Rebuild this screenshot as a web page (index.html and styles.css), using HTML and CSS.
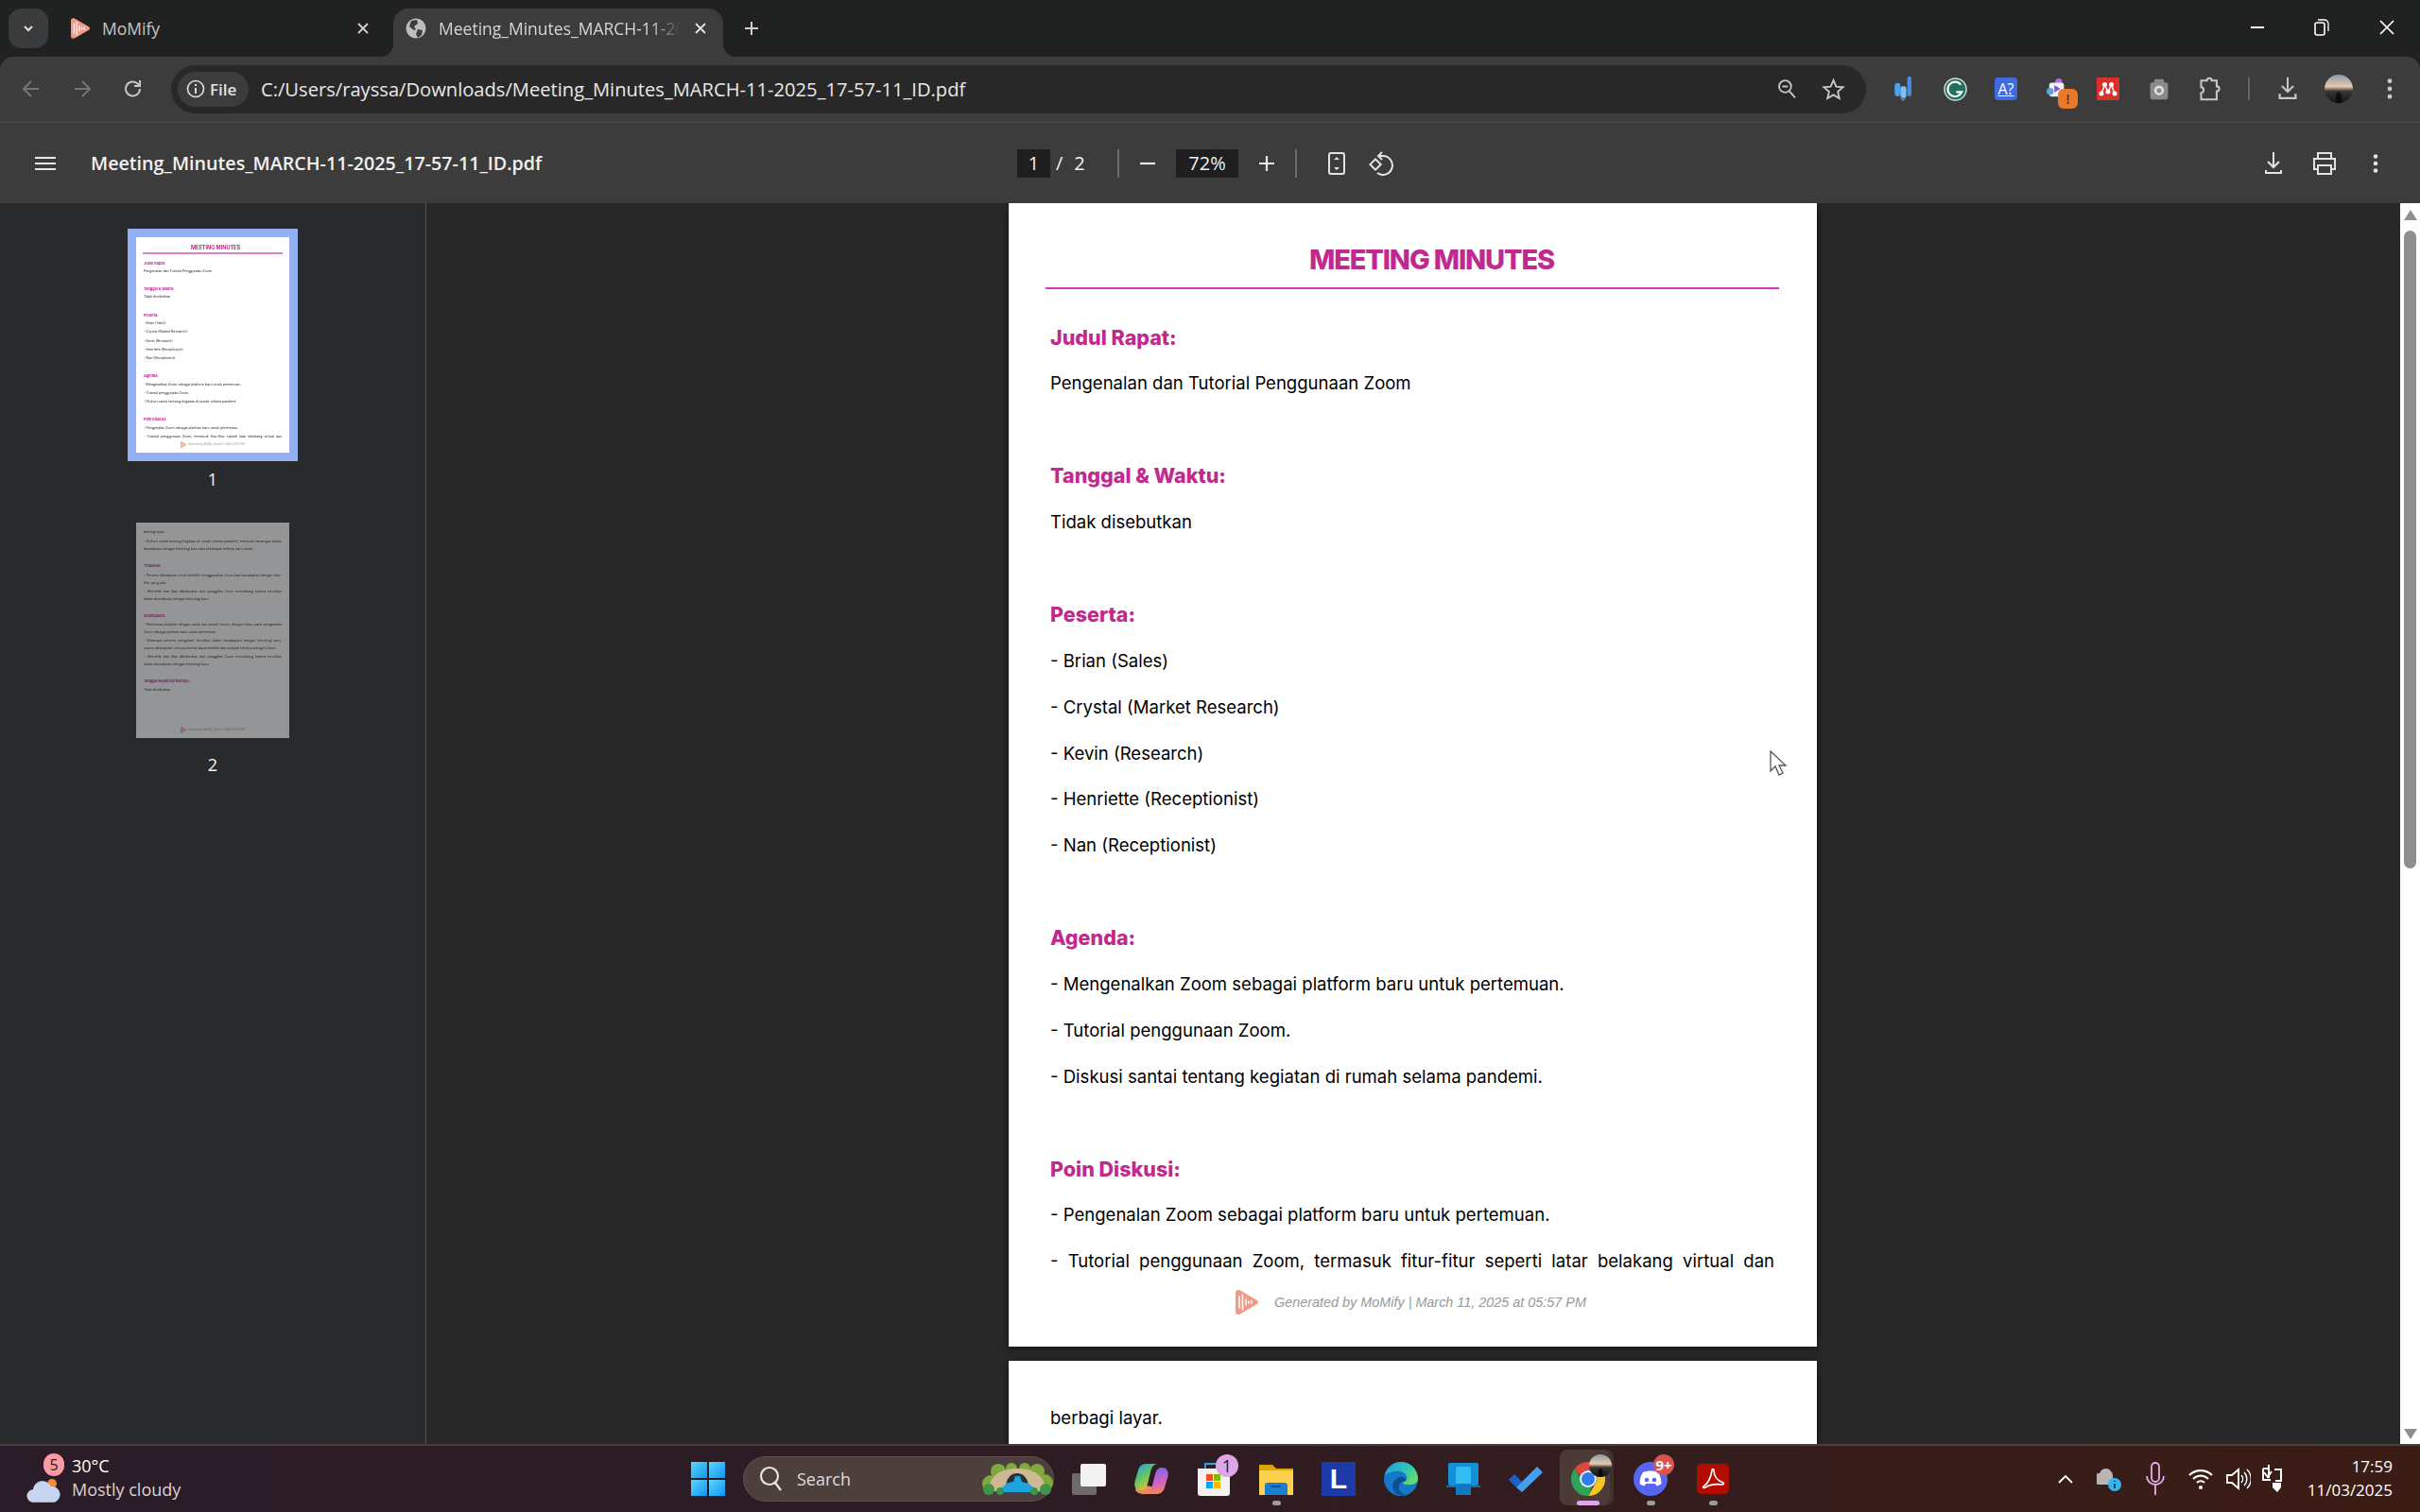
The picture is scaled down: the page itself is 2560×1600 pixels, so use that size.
FILE: index.html
```html
<!DOCTYPE html>
<html lang="en">
<head>
  <meta charset="UTF-8">
  <title>Meeting_Minutes_MARCH-11-2025_17-57-11_ID.pdf</title>
  <link rel="stylesheet" href="styles.css">
</head>
<body>
  <svg class="defs" width="0" height="0">
    <defs>
      <symbol id="momify" viewBox="0 0 24 26">
        <path fill="#ef9b86" d="M3 0C1 0 0 1 0 3v20c0 2 1 3 3 3 1.200 0 2.200-.6 3.200-1.300L22.800 15c1.600-1 1.600-3 0-4L6.200 1.300C5.200.6 4.200 0 3 0z"/>
        <path stroke="#fff" stroke-width="1.500" stroke-linecap="round" d="M4 7v12M7.500 5v16M11 10v6M14 12v2M17 11.500v3"/>
      </symbol>
      <linearGradient id="win" x1="0" y1="0" x2="1" y2="1"><stop offset="0" stop-color="#5fd4fc"/><stop offset="1" stop-color="#0f96f3"/></linearGradient>
      <linearGradient id="edge" x1="0" y1="0" x2="1" y2=".6"><stop offset="0" stop-color="#1b9ed8"/><stop offset=".55" stop-color="#2bc0c0"/><stop offset="1" stop-color="#62dc6a"/></linearGradient>
      <linearGradient id="sunset" x1="0" y1="0" x2="0" y2="1"><stop offset="0" stop-color="#8a9aa8"/><stop offset=".42" stop-color="#e8c8ae"/><stop offset=".58" stop-color="#3a3634"/><stop offset="1" stop-color="#141414"/></linearGradient>
      <linearGradient id="copilot-a" x1="0" y1="0" x2=".6" y2="1"><stop offset="0" stop-color="#1f9cf0"/><stop offset=".5" stop-color="#5ec46a"/><stop offset="1" stop-color="#f5c330"/></linearGradient>
      <linearGradient id="copilot-b" x1=".4" y1="0" x2=".6" y2="1"><stop offset="0" stop-color="#7a6ae8"/><stop offset=".55" stop-color="#d060c8"/><stop offset="1" stop-color="#f08a5a"/></linearGradient>
      <symbol id="avatar" viewBox="0 0 30 30"><circle cx="15" cy="15" r="15" fill="url(#sunset)"/><path fill="#0c0c0c" d="M12 30v-9l3-3 3 3v9z"/></symbol>
    </defs>
  </svg>

  <header class="tabstrip">
    <button class="tab-search"><svg width="14" height="14" viewBox="0 0 14 14"><path d="M3 5l4 4 4-4" fill="none" stroke="#e3e3e3" stroke-width="2"/></svg></button>
    <div class="tab">
      <svg class="tab-icon" width="20" height="22"><use href="#momify"/></svg>
      <span class="tab-title">MoMify</span>
      <svg class="tab-close" width="14" height="14" viewBox="0 0 14 14"><path d="M2 2l10 10M12 2L2 12" stroke="#cfcfcf" stroke-width="1.800"/></svg>
    </div>
    <div class="tab tab-active">
      <svg class="tab-icon" width="22" height="22" viewBox="0 0 22 22"><circle cx="11" cy="11" r="10.500" fill="#bdbdbd"/><path fill="#3c3c3c" d="M6 3l6-1 1 4-4 3 2 3-2 1-5-4zM13 12l5 1-1 5-4 3-2-4z"/></svg>
      <span class="tab-title tab-title-cut">Meeting_Minutes_MARCH-11-2025_17-57-11_ID.pdf</span>
      <svg class="tab-close" width="14" height="14" viewBox="0 0 14 14"><path d="M2 2l10 10M12 2L2 12" stroke="#e3e3e3" stroke-width="1.800"/></svg>
    </div>
    <button class="tab-new"><svg width="18" height="18" viewBox="0 0 18 18"><path d="M9 2v14M2 9h14" stroke="#cfcfcf" stroke-width="2"/></svg></button>
    <div class="window-controls">
      <span class="window-btn"><svg width="16" height="16" viewBox="0 0 16 16"><path d="M1 8h14" stroke="#fff" stroke-width="2"/></svg></span>
      <span class="window-btn"><svg width="16" height="20" viewBox="0 0 16 20"><rect x="1" y="5" width="10" height="13" rx="2" fill="none" stroke="#fff" stroke-width="1.600"/><path d="M4 2h7c2 0 4 2 4 4v8" fill="none" stroke="#fff" stroke-width="1.300"/></svg></span>
      <span class="window-btn window-close"><svg width="16" height="16" viewBox="0 0 16 16"><path d="M1 1l14 14M15 1L1 15" stroke="#fff" stroke-width="1.700"/></svg></span>
    </div>
  </header>

  <nav class="toolbar">
    <span class="slot"><svg width="22" height="22" viewBox="0 0 22 22"><path d="M19 11H4M11 3l-8 8 8 8" fill="none" stroke="#757575" stroke-width="2"/></svg></span>
    <span class="slot"><svg width="22" height="22" viewBox="0 0 22 22"><path d="M3 11h15M11 3l8 8-8 8" fill="none" stroke="#757575" stroke-width="2"/></svg></span>
    <span class="slot"><svg width="22" height="22" viewBox="0 0 22 22"><path d="M18 11a7.500 7.500 0 1 1-2.200-5.300L18 8M18 2v6h-6" fill="none" stroke="#c7c7c7" stroke-width="2"/></svg></span>
    <div class="omnibox">
      <span class="chip">
        <svg width="20" height="20" viewBox="0 0 20 20"><circle cx="10" cy="10" r="8.500" fill="none" stroke="#dedede" stroke-width="1.600"/><path d="M10 9v6M10 5v2" stroke="#dedede" stroke-width="2"/></svg>
        File
      </span>
      <span class="url">C:/Users/rayssa/Downloads/Meeting_Minutes_MARCH-11-2025_17-57-11_ID.pdf</span>
      <span class="omni-icon"><svg width="21" height="22" viewBox="0 0 24 26"><circle cx="9.500" cy="10" r="7.500" fill="none" stroke="#c7c7c7" stroke-width="2.200"/><path d="M6 10h7M15 16l7 8" stroke="#c7c7c7" stroke-width="2.200"/></svg></span>
      <span class="omni-icon"><svg width="25" height="25" viewBox="0 0 26 26"><path d="M13 3l3 7 7.500.7-5.700 5 1.700 7.300L13 19.200 6.500 23l1.700-7.300-5.700-5L10 10z" fill="none" stroke="#c7c7c7" stroke-width="2"/></svg></span>
    </div>
    <span class="slot slot-first">
      <svg width="20" height="30" viewBox="0 0 22 34"><rect x="0" y="10" width="7" height="16" rx="3.500" fill="#4aa3f0"/><rect x="7" y="14" width="7" height="14" rx="3" fill="#7cc0f5"/><rect x="15" y="2" width="5" height="24" rx="2.500" fill="#3f8fe8"/><path d="M6 28h8l-4 4z" fill="#6e7a88"/></svg>
    </span>
    <span class="slot">
      <svg width="25" height="25" viewBox="0 0 26 26"><circle cx="13" cy="13" r="12" fill="#23705f" stroke="#cfe0da" stroke-width="1.500"/><path d="M19 8a8 8 0 1 0 1 8h-6" fill="none" stroke="#fff" stroke-width="2.200"/></svg>
    </span>
    <span class="slot"><span class="ext-tile ext-a">A?</span></span>
    <span class="slot slot-badged">
      <svg width="22" height="24" viewBox="0 0 24 26"><circle cx="14" cy="5" r="4" fill="#b06ae8"/><rect x="3" y="6" width="17" height="16" rx="3" fill="#eef1f6"/><circle cx="4" cy="16" r="4" fill="#5aa6e8"/><path d="M9 9l7 4-7 4z" fill="#8a4ae0"/></svg>
      <span class="ext-alert">!</span>
    </span>
    <span class="slot"><span class="ext-tile ext-m"><svg width="20" height="16" viewBox="0 0 20 16"><g fill="#fff"><circle cx="6.500" cy="3.500" r="2.500"/><circle cx="13.500" cy="3.500" r="2.500"/><circle cx="3" cy="13" r="2.500"/><circle cx="10" cy="11" r="2.500"/><circle cx="17" cy="13" r="2.500"/></g><path d="M6.500 4L3 13M6.500 4L10 11M13.500 4L10 11M13.500 4L17 13" stroke="#fff" stroke-width="1.500"/></svg></span></span>
    <span class="slot"><svg width="22" height="24" viewBox="0 0 24 28"><rect x="1" y="6" width="22" height="21" rx="3" fill="#8a8a8a"/><rect x="6" y="2" width="12" height="6" rx="2" fill="#8a8a8a"/><circle cx="12" cy="16" r="6" fill="#e0e0e0"/><circle cx="12" cy="16" r="3" fill="#8a8a8a"/></svg></span>
    <span class="slot"><svg width="24" height="26" viewBox="0 0 26 30"><path d="M2 5h7c0-4 6-4 6 0h6v7c4 0 4 6 0 6v10H2v-8c4 0 4-7 0-7z" fill="none" stroke="#c7c7c7" stroke-width="2.400"/></svg></span>
    <span class="tool-sep"></span>
    <span class="slot"><svg width="24" height="26" viewBox="0 0 26 34"><path d="M13 1v20M5 13l8 8 8-8" fill="none" stroke="#c7c7c7" stroke-width="2.600"/><path d="M2 24v6h22v-6" fill="none" stroke="#c7c7c7" stroke-width="3"/></svg></span>
    <span class="slot"><svg width="30" height="30"><use href="#avatar"/></svg></span>
    <span class="slot"><svg width="6" height="22" viewBox="0 0 6 24"><g fill="#c7c7c7"><circle cx="3" cy="3" r="2.600"/><circle cx="3" cy="12" r="2.600"/><circle cx="3" cy="21" r="2.600"/></g></svg></span>
  </nav>

  <div class="pdf-bar">
    <div class="pdf-left">
      <span class="pdf-menu"><svg width="22" height="16" viewBox="0 0 22 16"><path d="M0 2h22M0 8h22M0 14h22" stroke="#e8e8e8" stroke-width="2.200"/></svg></span>
      <span class="pdf-name">Meeting_Minutes_MARCH-11-2025_17-57-11_ID.pdf</span>
    </div>
    <span class="pdf-field pdf-page">1</span>
    <span class="pdf-count"><span>/</span><span>2</span></span>
    <span class="pdf-sep"></span>
    <span class="pdf-btn"><svg width="18" height="18" viewBox="0 0 18 18"><path d="M1 9h16" stroke="#e8e8e8" stroke-width="2.200"/></svg></span>
    <span class="pdf-field pdf-zoom">72%</span>
    <span class="pdf-btn"><svg width="18" height="18" viewBox="0 0 18 18"><path d="M9 1v16M1 9h16" stroke="#e8e8e8" stroke-width="2.200"/></svg></span>
    <span class="pdf-sep"></span>
    <span class="pdf-tool pdf-fit"><svg width="18" height="24" viewBox="0 0 18 24"><rect x="1" y="1" width="16" height="22" rx="2" fill="none" stroke="#e3e3e3" stroke-width="2"/><path d="M9 5l3 3H6zM9 19l3-3H6z" fill="#e3e3e3"/></svg></span>
    <span class="pdf-tool pdf-rotate"><svg width="26" height="26" viewBox="0 0 26 26"><rect x="-4" y="-4" width="8" height="8" transform="translate(7 14) rotate(45)" fill="none" stroke="#e3e3e3" stroke-width="2"/><path d="M11 5h3a10 10 0 1 1-5 18M14 1l-4 4 4 4" fill="none" stroke="#e3e3e3" stroke-width="2"/></svg></span>
    <div class="pdf-right">
      <span class="slot"><svg width="20" height="26" viewBox="0 0 20 26"><path d="M10 1v16M4 11l6 6 6-6" fill="none" stroke="#e3e3e3" stroke-width="2"/><path d="M2 20v3h16v-3" fill="none" stroke="#e3e3e3" stroke-width="2"/></svg></span>
      <span class="slot"><svg width="24" height="26" viewBox="0 0 24 26"><path d="M5 8V2h14v6M5 19H1V8h22v11h-4" fill="none" stroke="#e3e3e3" stroke-width="2"/><rect x="5" y="15" width="14" height="9" fill="none" stroke="#e3e3e3" stroke-width="2"/></svg></span>
      <span class="slot"><svg width="6" height="20" viewBox="0 0 6 20"><g fill="#e3e3e3"><circle cx="3" cy="2.500" r="2.300"/><circle cx="3" cy="10" r="2.300"/><circle cx="3" cy="17.500" r="2.300"/></g></svg></span>
    </div>
  </div>

  <main class="workspace">
    <aside class="sidebar">
      <div class="thumb thumb-current">
        <div class="mini">
          <div class="mini-title">MEETING MINUTES</div>
          <div class="mini-rule"></div>
          <div class="mini-head">Judul Rapat:</div>
          <div class="mini-line">Pengenalan dan Tutorial Penggunaan Zoom</div>
          <div class="mini-head mini-gap">Tanggal &amp; Waktu:</div>
          <div class="mini-line">Tidak disebutkan</div>
          <div class="mini-head mini-gap">Peserta:</div>
          <div class="mini-line">- Brian (Sales)</div>
          <div class="mini-line">- Crystal (Market Research)</div>
          <div class="mini-line">- Kevin (Research)</div>
          <div class="mini-line">- Henriette (Receptionist)</div>
          <div class="mini-line">- Nan (Receptionist)</div>
          <div class="mini-head mini-gap">Agenda:</div>
          <div class="mini-line">- Mengenalkan Zoom sebagai platform baru untuk pertemuan.</div>
          <div class="mini-line">- Tutorial penggunaan Zoom.</div>
          <div class="mini-line">- Diskusi santai tentang kegiatan di rumah selama pandemi.</div>
          <div class="mini-head mini-gap">Poin Diskusi:</div>
          <div class="mini-line">- Pengenalan Zoom sebagai platform baru untuk pertemuan.</div>
          <div class="mini-line mini-full">- Tutorial penggunaan Zoom, termasuk fitur-fitur seperti latar belakang virtual dan</div>
          <div class="mini-foot"><svg width="6" height="7"><use href="#momify"/></svg>Generated by MoMify | March 11, 2025 at 05:57 PM</div>
        </div>
      </div>
      <div class="thumb-label">1</div>
      <div class="thumb">
        <div class="mini mini-dim">
          <div class="mini-line">berbagi layar.</div>
          <p class="mini-para">- Diskusi santai tentang kegiatan di rumah selama pandemi, termasuk tantangan dalam beradaptasi dengan teknologi baru dan kehidupan bekerja dari rumah.</p>
          <div class="mini-head mini-gap">Tindakan:</div>
          <p class="mini-para">- Peserta diharapkan untuk berlatih menggunakan Zoom dan beradaptasi dengan fitur-fitur yang ada.</p>
          <p class="mini-para">- Henriette dan Nan dibebaskan dari panggilan Zoom mendatang karena kesulitan dalam beradaptasi dengan teknologi baru.</p>
          <div class="mini-head mini-gap">Kesimpulan:</div>
          <p class="mini-para">- Pertemuan berjalan dengan santai dan penuh humor, dengan fokus pada pengenalan Zoom sebagai platform baru untuk pertemuan.</p>
          <p class="mini-para">- Beberapa peserta mengalami kesulitan dalam beradaptasi dengan teknologi baru, namun diharapkan semua peserta dapat berlatih dan menjadi terbiasa dengan Zoom.</p>
          <p class="mini-para">- Henriette dan Nan dibebaskan dari panggilan Zoom mendatang karena kesulitan dalam beradaptasi dengan teknologi baru.</p>
          <div class="mini-head mini-gap">Tanggal Rapat Berikutnya:</div>
          <div class="mini-line">Tidak disebutkan</div>
          <div class="mini-foot"><svg width="6" height="7"><use href="#momify"/></svg>Generated by MoMify | March 11, 2025 at 05:57 PM</div>
        </div>
      </div>
      <div class="thumb-label">2</div>
    </aside>

    <section class="viewer">
      <article class="sheet">
        <h1 class="sheet-title">MEETING MINUTES</h1>
        <div class="sheet-rule"></div>
        <div class="sheet-section sheet-first">
          <h2>Judul Rapat:</h2>
          <p>Pengenalan dan Tutorial Penggunaan Zoom</p>
        </div>
        <div class="sheet-section">
          <h2>Tanggal &amp; Waktu:</h2>
          <p>Tidak disebutkan</p>
        </div>
        <div class="sheet-section">
          <h2>Peserta:</h2>
          <p>- Brian (Sales)</p>
          <p>- Crystal (Market Research)</p>
          <p>- Kevin (Research)</p>
          <p>- Henriette (Receptionist)</p>
          <p>- Nan (Receptionist)</p>
        </div>
        <div class="sheet-section">
          <h2>Agenda:</h2>
          <p>- Mengenalkan Zoom sebagai platform baru untuk pertemuan.</p>
          <p>- Tutorial penggunaan Zoom.</p>
          <p>- Diskusi santai tentang kegiatan di rumah selama pandemi.</p>
        </div>
        <div class="sheet-section">
          <h2>Poin Diskusi:</h2>
          <p>- Pengenalan Zoom sebagai platform baru untuk pertemuan.</p>
          <p class="full-line">- Tutorial penggunaan Zoom, termasuk fitur-fitur seperti latar belakang virtual dan</p>
        </div>
        <footer class="sheet-foot">
          <svg width="24" height="26"><use href="#momify"/></svg>
          <span>Generated by MoMify | March 11, 2025 at 05:57 PM</span>
        </footer>
      </article>
      <article class="sheet sheet-next">
        <div class="sheet-section sheet-first">
          <p>berbagi layar.</p>
        </div>
      </article>
    </section>

    <div class="scrollbar">
      <svg width="14" height="11" viewBox="0 0 14 11"><path d="M7 0l7 11H0z" fill="#8f8f8f"/></svg>
      <span class="scroll-thumb"></span>
      <svg class="scroll-down" width="14" height="11" viewBox="0 0 14 11"><path d="M7 11l7-11H0z" fill="#8f8f8f"/></svg>
    </div>

    <svg class="cursor" width="20" height="28" viewBox="0 0 20 28"><path d="M2 1v21l5-5 4 9 4-2-4-8h7z" fill="#fff" stroke="#555" stroke-width="1.300"/></svg>
  </main>

  <footer class="taskbar">
    <div class="weather">
      <span class="weather-icon">
        <svg width="36" height="32" viewBox="0 0 36 30"><circle cx="27" cy="9" r="5" fill="#f08a3c"/><path d="M8 29a7 7 0 0 1-1-14 10 10 0 0 1 19-3 8.500 8.500 0 0 1 2 17z" fill="#c6d6f2"/><path d="M8 29a7 7 0 0 1-3-1h26a8 8 0 0 1-3 1z" fill="#8fb0e6"/></svg>
        <span class="weather-badge">5</span>
      </span>
      <div class="weather-text">
        <div>30°C</div>
        <div class="weather-desc">Mostly cloudy</div>
      </div>
    </div>
    <span class="task">
      <svg width="36" height="36" viewBox="0 0 36 36"><rect width="17" height="17" x="0" y="0" fill="url(#win)"/><rect width="17" height="17" x="19" y="0" fill="url(#win)"/><rect width="17" height="17" x="0" y="19" fill="url(#win)"/><rect width="17" height="17" x="19" y="19" fill="url(#win)"/></svg>
    </span>
    <div class="search">
      <svg width="26" height="28" viewBox="0 0 26 28"><circle cx="11" cy="11" r="9" fill="none" stroke="#e8e4e0" stroke-width="2.200"/><path d="M17 18l6 8" stroke="#e8e4e0" stroke-width="2.400"/></svg>
      <span class="search-label">Search</span>
      <svg class="search-art" width="76" height="34" viewBox="0 0 76 34">
        <g fill="#7fa83f">
          <circle cx="10" cy="22" r="9"/><circle cx="18" cy="9" r="8"/><circle cx="32" cy="6" r="6"/><circle cx="46" cy="6" r="6"/><circle cx="59" cy="9" r="8"/><circle cx="67" cy="21" r="9"/>
        </g>
        <path d="M8 30C8 14 20 6 38 6s30 8 30 24z" fill="#cfb994"/>
        <path d="M26 26c0-9 5-15 12-15s12 6 12 15z" fill="#2a3238"/>
        <path d="M16 31l12-10 6-1 2-6h5l2 6 7 2 12 9z" fill="#1fa3dc"/>
        <g fill="#3f9448">
          <circle cx="8" cy="28" r="6"/><circle cx="20" cy="30" r="4"/><circle cx="56" cy="30" r="4"/><circle cx="68" cy="28" r="6"/>
        </g>
      </svg>
    </div>
    <span class="task">
      <svg width="36" height="33" viewBox="0 0 36 33"><rect x="0" y="10" width="26" height="23" rx="2" fill="#6e6a6a"/><rect x="9" y="0" width="27" height="24" rx="2" fill="#f2f2f2"/></svg>
    </span>
    <span class="task">
      <svg width="36" height="34" viewBox="0 0 36 34"><path d="M24 26c-1 4-4 7-8 7h-3c-8 1-12-3-12-5 0-3 9-1 11-4z" fill="#f08a5a"/><path d="M12 1h12c-4 1-6 4-7 9l-3 12c-1 4-3 7-7 7C1 29-1 24 1 18L4 8c1-4 4-7 8-7z" fill="url(#copilot-a)"/><path d="M24 33H12c4-1 6-4 7-9l3-12c1-4 3-7 7-7 6 0 8 5 6 11l-3 10c-1 4-4 7-8 7z" fill="url(#copilot-b)"/></svg>
    </span>
    <span class="task">
      <svg width="36" height="36" viewBox="0 0 36 36"><path d="M9 7V2h12v5" fill="none" stroke="#2aa0e8" stroke-width="2"/><path d="M1 7h34v26a3 3 0 0 1-3 3H4a3 3 0 0 1-3-3z" fill="#f4f2f0"/><rect x="10" y="13" width="7" height="7" fill="#f25022"/><rect x="18" y="13" width="7" height="7" fill="#7fba00"/><rect x="10" y="21" width="7" height="7" fill="#00a4ef"/><rect x="18" y="21" width="7" height="7" fill="#ffb900"/></svg>
      <span class="task-badge badge-lilac">1</span>
    </span>
    <span class="task task-open">
      <svg width="36" height="34" viewBox="0 0 36 34"><path d="M0 2h14l4 4h18v28H0z" fill="#e0a400"/><path d="M0 8h36v26H0z" fill="#fdd04f"/><path d="M6 32V24a3 3 0 0 1 3-3h18a3 3 0 0 1 3 3v10H6z" fill="#1a7fd0"/><path d="M13 25h10" stroke="#0b4f8a" stroke-width="2"/></svg>
    </span>
    <span class="task"><span class="letter-tile">L</span></span>
    <span class="task">
      <svg width="36" height="36" viewBox="0 0 36 36"><circle cx="18" cy="18" r="18" fill="#1678c8"/><path d="M1 14C3 6 10 0 18 0c10 0 18 8 18 18 0 4-4 6-9 6h-4c-2 0-3-1-3-2 3-1 5-3 4-7-2-5-8-6-13-5-4 1-8 2-10 4z" fill="url(#edge)"/><path d="M12 33c-5-6-3-15 5-17 3-1 6 1 6 4-5 0-8 4-7 9 1 3 4 5 7 6-4 1-8 0-11-2z" fill="#0d4f96"/></svg>
    </span>
    <span class="task">
      <svg width="36" height="34" viewBox="0 0 36 34"><rect x="2" y="0" width="32" height="24" rx="2" fill="#1590d8"/><rect x="0" y="24" width="36" height="2" fill="#0f6aa8"/><rect x="7" y="4" width="16" height="30" rx="2" fill="#33bdf2" transform="translate(3 0)"/><rect x="10" y="22" width="16" height="12" fill="#0f78c4"/></svg>
    </span>
    <span class="task">
      <svg width="36" height="28" viewBox="0 0 36 28"><path d="M0 15l6-6 8 8-6 6z" fill="#1d5fc8"/><path d="M8 23L30 1l6 6-22 21z" fill="#44a0ec"/></svg>
    </span>
    <span class="task task-running">
      <svg class="task-main" width="36" height="36" viewBox="0 0 36 36"><path d="M18 0a18 18 0 0 1 15.600 9H18a9 9 0 0 0-8.500 6L3.800 7A18 18 0 0 1 18 0z" fill="#e2453a"/><path d="M33.600 9A18 18 0 0 1 18 36l8-13.500A9 9 0 0 0 26 13z" fill="#f7c325"/><path d="M3.800 7l8.200 14a9 9 0 0 0 10 6l-4 9A18 18 0 0 1 3.800 7z" fill="#2ea45a"/><circle cx="18" cy="18" r="9" fill="#e8f0fe"/><circle cx="18" cy="18" r="7" fill="#2f7bea"/></svg>
      <svg class="task-avatar" width="24" height="24"><use href="#avatar"/></svg>
    </span>
    <span class="task task-open">
      <svg width="36" height="36" viewBox="0 0 36 36"><circle cx="18" cy="18" r="18" fill="#5865f2"/><path d="M10 11c5-2 11-2 16 0 2 3 3.500 7 3.500 12-2 1.500-3.500 2-5 2.500l-1.500-2.500h-10L11.500 25.500c-1.500-.5-3-1-5-2.500 0-5 1.500-9 3.500-12z" fill="#fff"/><circle cx="14" cy="19" r="2.300" fill="#5865f2"/><circle cx="22" cy="19" r="2.300" fill="#5865f2"/></svg>
      <span class="task-badge badge-red">9+</span>
    </span>
    <span class="task task-open">
      <svg width="34" height="32" viewBox="0 0 34 32"><rect width="34" height="32" rx="5" fill="#b30b00"/><path d="M7 24c4-2 8-9 9-17 0-2 2-2 2 0 0 6 4 11 10 13 1 1 0 2-1 2-7-1-13 0-18 3-2 1-3 0-2-1z" fill="none" stroke="#fff" stroke-width="1.700"/></svg>
    </span>
    <div class="tray">
      <span class="tray-slot tray-a"><svg width="16" height="10" viewBox="0 0 16 10"><path d="M1 9l7-7 7 7" fill="none" stroke="#fff" stroke-width="1.800"/></svg></span>
      <span class="tray-slot tray-b"><svg width="28" height="30" viewBox="0 0 28 30"><path d="M2 21a6 6 0 0 1 1-12C5 4 12 2 15 7c3 1 3 14 0 14z" fill="#b9b5b2"/><circle cx="19" cy="21" r="7" fill="#33b5f0"/><path d="M19 17v1M19 20v5" stroke="#123" stroke-width="1.600"/></svg></span>
      <span class="tray-slot tray-c"><svg width="20" height="36" viewBox="0 0 20 36"><rect x="6" y="1" width="8" height="20" rx="4" fill="none" stroke="#e0b0e8" stroke-width="1.800"/><path d="M1 15a9 9 0 0 0 18 0M10 24v11" fill="none" stroke="#e0b0e8" stroke-width="1.800"/></svg></span>
      <span class="tray-slot tray-b"><svg width="26" height="24" viewBox="0 0 26 24"><path d="M1 8a17 17 0 0 1 24 0M5 12a11 11 0 0 1 16 0M9 16a5.500 5.500 0 0 1 8 0" fill="none" stroke="#fff" stroke-width="2.200"/><circle cx="13" cy="21" r="2" fill="#fff"/></svg></span>
      <span class="tray-slot tray-d"><svg width="26" height="24" viewBox="0 0 26 24"><path d="M1 8h5l7-6v20l-7-6H1z" fill="none" stroke="#fff" stroke-width="1.800"/><path d="M16 8a6 6 0 0 1 0 8M19 5a10 10 0 0 1 0 14M22 2a14 14 0 0 1 0 20" fill="none" stroke="#fff" stroke-width="1.500"/></svg></span>
      <span class="tray-slot tray-e"><svg width="24" height="32" viewBox="0 0 24 32"><path d="M3 5h6V1M9 5v10M3 5v12h8M15 6h7v12h-6M4 9l4 5 4-6" fill="none" stroke="#fff" stroke-width="2"/><path d="M13 20h9v5l-4 5-5-5z" fill="#fff"/></svg></span>
      <div class="clock">
        <div>17:59</div>
        <div>11/03/2025</div>
      </div>
    </div>
  </footer>
</body>
</html>
```

FILE: styles.css
```css
* {
  box-sizing: border-box;
}

body {
  margin: 0;
  width: 2560px;
  height: 1600px;
  overflow: hidden;
  display: flex;
  flex-direction: column;
  position: relative;
  font-family: "Open Sans", "Noto Sans", sans-serif;
  color: #e3e3e3;
  background: #202222;
}

button {
  border: none;
  padding: 0;
  background: none;
  font: inherit;
  color: inherit;
}

.defs {
  position: absolute;
}

/* tab strip */
.tabstrip {
  height: 60px;
  flex: none;
  display: flex;
  align-items: flex-end;
  padding-left: 9px;
  background: #202222;
}

.tab-search {
  width: 42px;
  height: 42px;
  margin-bottom: 9px;
  border-radius: 14px;
  background: #3a3b3c;
  display: flex;
  align-items: center;
  justify-content: center;
}

.tab {
  width: 365px;
  height: 51px;
  display: flex;
  align-items: center;
  padding: 0 0 9px 24px;
  font-size: 17.500px;
  color: #c4c7c5;
  position: relative;
}

.tab-icon {
  flex: none;
  margin-right: 13px;
}

.tab-title {
  flex: 1;
  white-space: nowrap;
  overflow: hidden;
}

.tab-close {
  flex: none;
  margin: 0 25px 0 0;
}

.tab-active {
  width: 349px;
  padding-left: 13px;
  background: #3c3c3c;
  border-radius: 16px 16px 0 0;
  color: #d6d6d6;
}

.tab-active .tab-close {
  margin-right: 17px;
}

.tab-active::before,
.tab-active::after {
  content: "";
  position: absolute;
  bottom: 0;
  width: 14px;
  height: 14px;
}

.tab-active::before {
  left: -14px;
  background: radial-gradient(circle at 0 0, transparent 14px, #3c3c3c 14.500px);
}

.tab-active::after {
  right: -14px;
  background: radial-gradient(circle at 100% 0, transparent 14px, #3c3c3c 14.500px);
}

.tab-title-cut {
  margin-right: 14px;
  -webkit-mask-image: linear-gradient(90deg, #000 88%, transparent);
  mask-image: linear-gradient(90deg, #000 88%, transparent);
}

.tab-new {
  width: 60px;
  height: 42px;
  margin: 0 0 9px 0;
  display: flex;
  align-items: center;
  justify-content: center;
}

.window-controls {
  margin-left: auto;
  align-self: flex-start;
  display: flex;
}

.window-btn {
  width: 68px;
  height: 58px;
  display: flex;
  align-items: center;
  justify-content: center;
}

.window-close {
  width: 70px;
}

/* address bar */
.toolbar {
  height: 70px;
  flex: none;
  display: flex;
  align-items: center;
  padding: 0 5px 1px 6px;
  background: #3c3c3c;
  border-bottom: 1px solid #4c4c4c;
  border-radius: 14px 14px 0 0;
}

.slot {
  width: 54px;
  height: 44px;
  flex: none;
  display: flex;
  align-items: center;
  justify-content: center;
  position: relative;
}

.slot-first {
  margin-left: 13px;
}

.omnibox {
  width: 1793px;
  height: 51px;
  flex: none;
  margin-left: 13px;
  display: flex;
  align-items: center;
  padding-left: 7px;
  padding-right: 10px;
  border-radius: 26px;
  background: #282828;
}

.chip {
  width: 75px;
  height: 37px;
  flex: none;
  display: flex;
  align-items: center;
  gap: 5px;
  padding-left: 9px;
  border-radius: 19px;
  background: #3c3c3c;
  font-size: 17px;
  font-weight: 600;
  color: #e3e3e3;
}

.url {
  flex: 1;
  margin-left: 13px;
  font-size: 20.150px;
  color: #e8e8e8;
  white-space: nowrap;
}

.omni-icon {
  width: 49px;
  flex: none;
  display: flex;
  justify-content: center;
}

.ext-tile {
  display: flex;
  align-items: center;
  justify-content: center;
  width: 24px;
  height: 24px;
  border-radius: 4px;
  color: #fff;
  font-size: 16px;
  line-height: 1;
}

.ext-a {
  background: #3f6ae0;
  text-decoration: underline;
}

.ext-m {
  border-radius: 1px;
  background: #d9302c;
}

.ext-alert {
  position: absolute;
  left: 28px;
  top: 22px;
  width: 21px;
  height: 21px;
  border-radius: 6px;
  background: #e8782a;
  color: #222;
  font-size: 15px;
  line-height: 21px;
  text-align: center;
}

.tool-sep {
  width: 2px;
  height: 24px;
  margin: 0 13px;
  flex: none;
  background: #666;
}

/* pdf toolbar */
.pdf-bar {
  height: 85px;
  flex: none;
  display: flex;
  align-items: center;
  background: #3c3c3c;
  color: #f1f1f1;
}

.pdf-left {
  width: 1076px;
  flex: none;
  display: flex;
  align-items: center;
}

.pdf-menu {
  margin-left: 37px;
  display: flex;
}

.pdf-name {
  margin-left: 37px;
  font-size: 19.700px;
  font-weight: 600;
  white-space: nowrap;
}

.pdf-field {
  height: 30px;
  flex: none;
  background: #1e1e1e;
  font-size: 20px;
  line-height: 30px;
  text-align: center;
}

.pdf-page {
  width: 35px;
}

.pdf-zoom {
  width: 66px;
}

.pdf-count {
  width: 71px;
  flex: none;
  display: flex;
  gap: 12px;
  padding-left: 6px;
  font-size: 20px;
}

.pdf-sep {
  width: 2px;
  height: 30px;
  flex: none;
  background: #6e6e6e;
}

.pdf-btn {
  width: 60px;
  flex: none;
  display: flex;
  justify-content: center;
}

.pdf-tool {
  flex: none;
  width: 36px;
  display: flex;
  justify-content: center;
}

.pdf-fit {
  margin-left: 24px;
}

.pdf-rotate {
  margin-left: 11px;
}

.pdf-right {
  margin-left: auto;
  display: flex;
  padding-right: 20px;
}

/* main area */
.workspace {
  flex: 1;
  min-height: 0;
  display: flex;
  background: #282828;
}

.sidebar {
  width: 451px;
  flex: none;
  display: flex;
  flex-direction: column;
  align-items: center;
  padding-top: 27px;
  background: #292a2c;
  border-right: 1px solid #55565a;
}

.thumb {
  padding: 9px;
  width: 180px;
  height: 246px;
  flex: none;
}

.thumb-current {
  background: #93b1f2;
}

.thumb-label {
  height: 24px;
  margin: 7px 0 25px;
  font-size: 18px;
  line-height: 24px;
  color: #f5f5f5;
}

.mini {
  height: 228px;
  padding: 8px 8px 0;
  display: flex;
  flex-direction: column;
  overflow: hidden;
  background: #fff;
  font-family: Inter, sans-serif;
  font-size: 3.500px;
  color: #222;
  filter: blur(.25px);
}

.mini-dim {
  padding-top: 6px;
  opacity: .5;
}

.mini-title {
  margin-left: 6px;
  font-size: 5.500px;
  line-height: 7px;
  font-weight: 700;
  color: #c1298f;
  text-align: center;
}

.mini-rule {
  height: 2px;
  margin: 1px -1px 0;
  background: #e07fce;
}

.mini-head {
  height: 9.200px;
  margin-top: 5px;
  font-weight: 700;
  font-size: 3.800px;
  line-height: 9.200px;
  color: #c1298f;
}

.mini-head.mini-gap {
  margin-top: 9.300px;
}

.mini-line {
  height: 9.200px;
  line-height: 9.200px;
  white-space: nowrap;
}

.mini-full {
  text-align: justify;
  text-align-last: justify;
}

.mini-para {
  margin: 1px 0 0;
  line-height: 8px;
  text-align: justify;
}

.mini-foot {
  margin-top: auto;
  margin-bottom: 5px;
  display: flex;
  align-items: center;
  justify-content: center;
  gap: 2px;
  font-family: "Liberation Sans", sans-serif;
  font-size: 2.600px;
  font-style: italic;
  color: #999;
}

.viewer {
  flex: 1;
  min-width: 0;
  overflow: hidden;
  display: flex;
  flex-direction: column;
  align-items: center;
  gap: 15px;
  padding-right: 1px;
}

.sheet {
  width: 855px;
  height: 1210px;
  flex: none;
  display: flex;
  flex-direction: column;
  padding-top: 40px;
  background: #fff;
  color: #000;
  font-family: Inter, sans-serif;
  box-shadow: 0 2px 8px rgba(0, 0, 0, .5);
}

.sheet-next {
  padding-top: 36px;
}

.sheet-title {
  height: 40px;
  margin: 0 0 0 40px;
  font-size: 29px;
  font-weight: 800;
  line-height: 40px;
  letter-spacing: -1.170px;
  color: #c1298f;
  text-align: center;
}

.sheet-rule {
  height: 1.500px;
  margin: 9px 40px 0 39px;
  background: #d936c0;
}

.sheet-section {
  margin: 48.900px 45px 0 44px;
}

.sheet-first {
  margin-top: 27px;
}

.sheet-next .sheet-first {
  margin-top: 0;
}

.sheet-section h2 {
  height: 48.900px;
  margin: 0;
  font-size: 21.500px;
  font-weight: 800;
  line-height: 48.900px;
  color: #c1298f;
}

.sheet-section p {
  height: 48.900px;
  margin: 0;
  font-size: 18.550px;
  line-height: 48.900px;
  white-space: nowrap;
}

.sheet-section .full-line {
  white-space: normal;
  text-align: justify;
  text-align-last: justify;
}

.sheet-foot {
  margin-top: auto;
  margin-bottom: 34px;
  padding-right: 4px;
  display: flex;
  align-items: center;
  justify-content: center;
  gap: 17px;
  font-family: "Liberation Sans", sans-serif;
  font-size: 14.400px;
  font-style: italic;
  color: #999;
}

.scrollbar {
  width: 21px;
  flex: none;
  display: flex;
  flex-direction: column;
  align-items: center;
  padding: 7px 0 5px;
  background: #fff;
}

.scroll-thumb {
  width: 13px;
  height: 675px;
  margin-top: 11px;
  border-radius: 7px;
  background: #8f8f8f;
}

.scroll-down {
  margin-top: auto;
}

.cursor {
  position: absolute;
  left: 1871px;
  top: 794px;
}

/* taskbar */
.taskbar {
  height: 72px;
  flex: none;
  display: flex;
  align-items: center;
  border-top: 2px solid #4a3d3c;
  background: linear-gradient(90deg, #2a1c28, #2e1c24 45%, #3c1d15);
  color: #fff;
  font-size: 18px;
}

.weather {
  width: 716px;
  flex: none;
  display: flex;
  align-items: center;
  padding-left: 28px;
}

.weather-icon {
  width: 48px;
  height: 54px;
  flex: none;
  position: relative;
}

.weather-icon svg {
  position: absolute;
  left: 0;
  bottom: 0;
}

.weather-badge {
  position: absolute;
  left: 18px;
  top: 0;
  width: 22px;
  height: 24px;
  border-radius: 12px;
  background: #ff9aa2;
  color: #222;
  font-size: 16px;
  line-height: 24px;
  text-align: center;
}

.weather-text {
  line-height: 25px;
  margin-bottom: 2px;
}

.weather-desc {
  color: #d8d4d4;
}

.task {
  width: 66px;
  height: 66px;
  flex: none;
  display: flex;
  align-items: center;
  justify-content: center;
  position: relative;
}

.task-open::after,
.task-running::after {
  content: "";
  position: absolute;
  bottom: 5px;
  left: 29px;
  width: 9px;
  height: 5px;
  border-radius: 3px;
  background: #a09a98;
}

.task-running::before {
  content: "";
  position: absolute;
  left: 3px;
  top: 2px;
  width: 53px;
  height: 59px;
  border-radius: 8px;
  background: #4c3a36;
  box-shadow: 4px 0 0 #43302c;
}

.task-running::after {
  left: 21px;
  width: 24px;
  background: #dda6e6;
}

.task-main {
  position: relative;
}

.task-badge {
  position: absolute;
  border-radius: 50%;
  text-align: center;
  font-size: 18px;
}

.badge-lilac {
  left: 35px;
  top: 7px;
  width: 24px;
  height: 24px;
  line-height: 24px;
  background: #dda6e6;
  color: #222;
}

.badge-red {
  left: 36px;
  top: 7px;
  width: 22px;
  height: 22px;
  line-height: 22px;
  background: #d9534f;
  font-size: 15px;
  font-weight: 700;
}

.task-avatar {
  position: absolute;
  left: 34px;
  top: 7px;
}

.letter-tile {
  width: 36px;
  height: 36px;
  background: #1e3aa8;
  color: #fff;
  font-family: "Liberation Sans", sans-serif;
  font-size: 30px;
  font-weight: 700;
  line-height: 36px;
  text-align: center;
}

.search {
  width: 329px;
  height: 48px;
  flex: none;
  margin: 0 4px;
  display: flex;
  align-items: center;
  padding-left: 16px;
  border-radius: 24px;
  background: #4d3f3b;
  border: 1px solid #5e504c;
}

.search-label {
  margin-left: 14px;
  color: #e0dcd8;
}

.search-art {
  margin-left: auto;
}

.tray {
  margin-left: auto;
  display: flex;
  align-items: center;
  padding-right: 29px;
}

.tray-slot {
  display: flex;
  justify-content: center;
  flex: none;
}

.tray-a {
  width: 48px;
}

.tray-b {
  width: 46px;
}

.tray-c {
  width: 50px;
}

.tray-d {
  width: 34px;
}

.tray-e {
  width: 36px;
}

.clock {
  width: 110px;
  flex: none;
  font-size: 17px;
  line-height: 25px;
  margin-bottom: 2px;
  text-align: right;
}
```
